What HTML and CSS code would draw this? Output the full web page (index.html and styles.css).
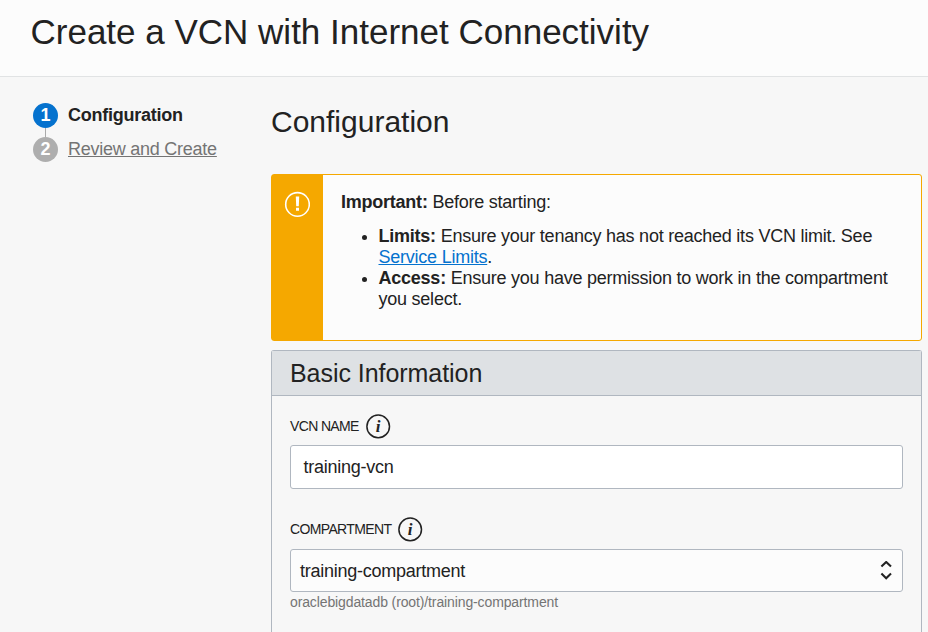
FILE: index.html
```html
<!DOCTYPE html>
<html lang="en">
<head>
<meta charset="utf-8">
<title>Create a VCN with Internet Connectivity</title>
<link rel="stylesheet" href="styles.css">
</head>
<body>
<header class="page-header"><h1>Create a VCN with Internet Connectivity</h1></header>
<div class="layout">
  <nav class="steps">
    <div class="step active"><span class="badge">1</span><b>Configuration</b></div>
    <div class="step"><span class="badge">2</span><a>Review and Create</a></div>
  </nav>
  <main>
    <h2>Configuration</h2>
    <section class="notice">
      <div class="notice-icon">
        <svg width="26" height="26" viewBox="0 0 26 26"><circle cx="13.5" cy="13.4" r="11.8" fill="none" stroke="#fff" stroke-width="1.6"/><path d="M11.8 5.4h3.4l-.4 9.8h-2.6zM12 16.7h3v3h-3z" fill="#fff"/></svg>
      </div>
      <div class="notice-body">
        <p><b>Important:</b> Before starting:</p>
        <ul>
          <li><b>Limits:</b> Ensure your tenancy has not reached its VCN limit. See<br><a>Service Limits</a>.</li>
          <li><b>Access:</b> Ensure you have permission to work in the compartment<br>you select.</li>
        </ul>
      </div>
    </section>
    <section class="panel">
      <h3>Basic Information</h3>
      <div class="fields">
        <div class="label"><span>VCN NAME</span><svg class="info" width="25" height="25" viewBox="0 0 25 25"><circle cx="12.2" cy="12.4" r="11.3"/><text x="12" y="17.8">i</text></svg></div>
        <div class="control name"><span>training-vcn</span></div>
        <div class="label second"><span>COMPARTMENT</span><svg class="info" width="25" height="25" viewBox="0 0 25 25"><circle cx="12.2" cy="12.4" r="11.3"/><text x="12" y="17.8">i</text></svg></div>
        <div class="control select"><span>training-compartment</span>
          <svg width="12" height="20" viewBox="0 0 12 20" fill="none" stroke="#222" stroke-width="2.1"><path d="M1.4 5.6L6.2 1l4.8 4.6M1.4 12.6l4.8 4.6 4.8-4.6"/></svg>
        </div>
        <div class="hint">oraclebigdatadb (root)/training-compartment</div>
      </div>
    </section>
  </main>
</div>
</body>
</html>
```
FILE: styles.css
```css
* { box-sizing: border-box; }
html, body { height: 100%; overflow: hidden; }
body { margin: 0; background: #f7f7f7; color: #222; font: 18px/21px "Liberation Sans", Arial, sans-serif; letter-spacing: -0.25px; display: flex; flex-direction: column; }
h1, h2, h3, p, ul { margin: 0; font-weight: 400; letter-spacing: 0; }
.page-header { height: 77px; flex: none; background: #fcfcfc; border-bottom: 1px solid #e1e3e4; padding: 11px 30.5px; }
h1 { font-size: 35px; line-height: 42px; white-space: nowrap; }
.layout { display: flex; flex: 1; min-height: 0; }
.steps { width: 271px; flex: none; padding: 26px 0 0 33px; display: flex; flex-direction: column; gap: 9px; }
.step { height: 25px; display: flex; align-items: center; gap: 10px; color: #747474; position: relative; }
.step a { text-decoration: underline; }
.active { color: #222; }
.active::after { content: ""; position: absolute; left: 12px; top: 25px; width: 1px; height: 9px; background: #aaa; }
.badge { width: 25px; height: 25px; border-radius: 50%; background: #aeaeae; color: #fff; font-weight: 700; text-align: center; line-height: 25px; }
.active .badge { background: #0572ce; }
main { width: 651px; display: flex; flex-direction: column; }
h2 { font-size: 30px; line-height: 36px; margin-top: 27px; }
.notice { height: 167px; flex: none; margin-top: 34px; border: 1px solid #f5a800; border-radius: 3px; background: #fcfcfc; display: flex; }
.notice-icon { width: 51px; background: #f5a800; padding: 16px 0 0 12px; flex: none; }
.notice-body { padding: 17px 0 0 18px; white-space: nowrap; }
.notice p, .notice ul { letter-spacing: -0.235px; }
.notice ul { margin-top: 13px; padding-left: 37.5px; }
.notice a { color: #0572ce; text-decoration: underline; }
.panel { margin-top: 9px; flex: 1; border: 1px solid #b0b7c0; border-bottom: 0; border-radius: 3px 3px 0 0; }
h3 { height: 45px; background: #dee1e4; border-bottom: 1px solid #b0b7c0; font-size: 25px; line-height: 45px; padding-left: 18px; letter-spacing: -0.05px; }
.fields { padding: 18px 18px 0; }
.label { display: flex; align-items: center; gap: 7px; height: 25px; font-size: 14px; letter-spacing: -0.64px; }
.info circle { fill: none; stroke: #222; stroke-width: 1.5; }
.info text { fill: #222; text-anchor: middle; font: italic bold 17px "Liberation Serif", serif; letter-spacing: 0; }
.control { height: 44px; margin-top: 6px; border: 1px solid #b0b7c0; border-radius: 3px; background: #fff; display: flex; align-items: center; justify-content: space-between; padding: 0 10px 0 12.5px; }
.second { margin-top: 28px; }
.select { padding: 1px 10px 0 9px; background: #fcfcfc; height: 43px; margin-top: 7px; }
.hint { font-size: 14px; line-height: 20px; color: #747474; letter-spacing: -0.12px; }
```
